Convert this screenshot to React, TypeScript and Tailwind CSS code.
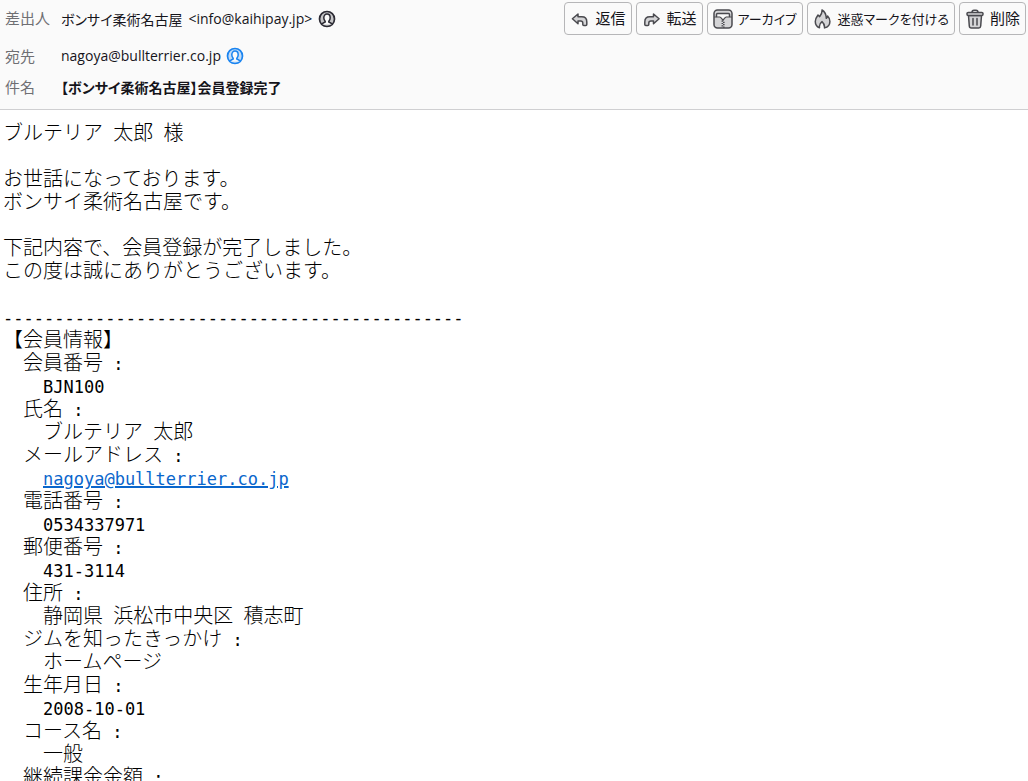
import type { ReactNode } from 'react';

const memberInfo = [
  { label: '会員番号', value: 'BJN100' },
  { label: '氏名', value: 'ブルテリア 太郎' },
  { label: 'メールアドレス', value: 'nagoya@bullterrier.co.jp', mail: true },
  { label: '電話番号', value: '0534337971' },
  { label: '郵便番号', value: '431-3114' },
  { label: '住所', value: '静岡県 浜松市中央区 積志町' },
  { label: 'ジムを知ったきっかけ', value: 'ホームページ' },
  { label: '生年月日', value: '2008-10-01' },
  { label: 'コース名', value: '一般' },
  { label: '継続課金金額', value: '' },
];

const iconProps = {
  viewBox: '0 0 20 20',
  className: 'w-5 h-5 shrink-0',
  fill: '#d4d4d6',
  stroke: '#4a4a4f',
  strokeWidth: 1.5,
  strokeLinejoin: 'round' as const,
  strokeLinecap: 'round' as const,
  'aria-hidden': true,
};

function ReplyIcon() {
  return (
    <svg {...iconProps}>
      <path d="M8 5 2.400 9.800 8 14.800V12h2.600c1.500 0 2.200.8 2.200 2v1.600c0 .6.4 1 1 1h2c.6 0 1-.4 1-1V13c0-3.400-1.900-5.200-5-5.200H8Z" />
    </svg>
  );
}

function ForwardIcon() {
  return (
    <svg {...iconProps}>
      <path d="M11.500 5l5.600 4.800-5.600 5V12H9c-1.500 0-2.200.8-2.200 2v1.600c0 .6-.4 1-1 1h-2c-.6 0-1-.4-1-1V13c0-3.400 1.900-5.200 5-5.200h3.700Z" />
    </svg>
  );
}

function ArchiveIcon() {
  return (
    <svg {...iconProps}>
      <rect x="1" y="1" width="18" height="18" rx="3.500" />
      <path d="M3.500 4.500h13v3.300h-3.300c-1 0-1.700 1.200-3.200 3.200-1.500-2-2.200-3.200-3.200-3.200H3.500Z" fill="#fafafa" stroke="none" />
      <path d="M3.500 7.500v-2c0-.7.400-1 1-1h11c.6 0 1 .3 1 1v2" fill="none" />
      <path d="M1.500 8h5.200c1 0 2 1.700 3.300 3.300 1.300-1.600 2.300-3.300 3.300-3.300h5.200" fill="none" strokeWidth="1.200" />
      <path d="M9.300 11.500v7" strokeWidth="1.600" strokeDasharray="1.200 1.200" strokeLinecap="butt" />
      <path d="M10.800 12.700v6" strokeWidth="1.600" strokeDasharray="1.200 1.200" strokeLinecap="butt" />
    </svg>
  );
}

function JunkIcon() {
  return (
    <svg {...iconProps}>
      <path d="M9 1c.3 3.400-1 4.800-2.400 6.600L5 6C3.500 8 2.300 10 2.300 12.400c0 3 1.700 5.300 4.200 6.400-.5-2.800.4-4.600 2.500-6.200 1.600 1.400 2.800 3.400 2.500 6.300 3.200-.9 5.400-3.300 5.400-6.500 0-2-.8-3.900-2.300-5.400-.1 1-.5 1.800-1.300 2.300C13.200 5.800 12 2.800 9 1Z" />
    </svg>
  );
}

function TrashIcon() {
  return (
    <svg {...iconProps}>
      <path d="M7 3.500c0-1.600.6-2.300 2-2.300h2c1.400 0 2 .7 2 2.300" fill="none" />
      <path d="M3.500 6.500 4.300 17c.1 1.200.8 1.900 2 1.900h7.400c1.200 0 1.900-.7 2-1.900l.8-10.500Z" />
      <rect x="2" y="3.400" width="16" height="3" rx="1.200" />
      <path d="M8 9.500v6.500M12 9.500v6.500" />
    </svg>
  );
}

function ContactIcon({ className }: { className: string }) {
  return (
    <svg viewBox="0 0 18 18" className={`w-[18px] h-[18px] ${className}`} fill="none" stroke="currentColor" aria-hidden="true">
      <circle cx="9" cy="9" r="7.500" strokeWidth="1.700" fill="currentColor" fillOpacity="0.25" />
      <path
        d="M4 14.400c.7-1.400 1.600-1.700 2.700-2.100.7-.2.700-.8.300-1.300-.8-.9-1.200-1.900-1.200-3.200C5.800 5.600 7 4.100 9 4.100s3.200 1.500 3.200 3.700c0 1.300-.4 2.300-1.200 3.200-.4.500-.4 1.100.3 1.300 1.100.4 2 .7 2.700 2.100"
        strokeWidth="1.500"
        fill="#fafafa"
      />
    </svg>
  );
}

function ToolButton({ icon, small, children }: { icon: ReactNode; small?: boolean; children: ReactNode }) {
  return (
    <button
      className={`flex items-center gap-[5px] h-[33px] px-[5px] border border-[#b6b6b8] rounded whitespace-nowrap ${
        small ? 'text-[13px]' : 'text-[15px]'
      }`}
    >
      {icon}
      {children}
    </button>
  );
}

function HeaderAddress({ children }: { children: ReactNode }) {
  return <span className="font-['Open_Sans',sans-serif] text-sm">{children}</span>;
}

// half-width runs are set in the monospace face, the rest stays in the Japanese face
function Plain({ text }: { text: string }) {
  return (
    <>
      {text.split(/([\x20-\x7e]+)/).map((part, i) =>
        i % 2 ? (
          <span key={i} className="font-['DejaVu_Sans_Mono',monospace] text-[17px] leading-none">
            {part}
          </span>
        ) : (
          part
        )
      )}
    </>
  );
}

export default function App() {
  return (
    <div className="h-screen flex flex-col overflow-hidden bg-white">
      <header className="bg-[#fafafa] border-b border-[#cfcfd1] pb-[10px] text-[15px] text-[#15141a] font-['Noto_Sans_CJK_JP',sans-serif] [font-feature-settings:'palt']">
        <div className="flex items-center h-[37px] pl-[5px] pr-0.5">
          <span className="w-14 shrink-0 text-[#6f6f73]">差出人</span>
          <span className="flex items-center gap-[6px] whitespace-nowrap text-sm">
            ボンサイ柔術名古屋
            <HeaderAddress>&lt;info@kaihipay.jp&gt;</HeaderAddress>
            <ContactIcon className="text-[#2b2a33]" />
          </span>
          <div className="flex gap-1 ml-auto">
            <ToolButton icon={<ReplyIcon />}>返信</ToolButton>
            <ToolButton icon={<ForwardIcon />}>転送</ToolButton>
            <ToolButton icon={<ArchiveIcon />} small>
              アーカイブ
            </ToolButton>
            <ToolButton icon={<JunkIcon />} small>
              迷惑マークを付ける
            </ToolButton>
            <ToolButton icon={<TrashIcon />}>削除</ToolButton>
          </div>
        </div>
        <div className="flex items-center h-[38px] pl-[5px]">
          <span className="w-14 shrink-0 text-[#6f6f73]">宛先</span>
          <span className="flex items-center gap-[5px]">
            <HeaderAddress>nagoya@bullterrier.co.jp</HeaderAddress>
            <ContactIcon className="text-[#1a84f0]" />
          </span>
        </div>
        <div className="flex items-center h-6 pl-[5px]">
          <span className="w-14 shrink-0 text-[#6f6f73]">件名</span>
          <h1 className="font-bold text-sm">【ボンサイ柔術名古屋】会員登録完了</h1>
        </div>
      </header>

      <main className="flex-1 overflow-hidden pt-[10px] pl-[3px] text-xl leading-[23px] font-light text-black font-['Noto_Sans_CJK_JP',sans-serif]">
        <p className="mb-[23px]">
          <Plain text="ブルテリア 太郎 様" />
        </p>
        <p className="mb-[23px]">
          お世話になっております。
          <br />
          ボンサイ柔術名古屋です。
        </p>
        <p className="mb-[23px]">
          下記内容で、会員登録が完了しました。
          <br />
          この度は誠にありがとうございます。
        </p>
        <p>
          <Plain text="---------------------------------------------" />
        </p>
        <h2>【会員情報】</h2>
        <dl className="pl-5">
          {memberInfo.map((item) => (
            <div key={item.label}>
              <dt>
                <Plain text={`${item.label} :`} />
              </dt>
              <dd className="pl-5">
                {item.mail ? (
                  <a href={`mailto:${item.value}`} className="text-[#0a66cc] underline">
                    <Plain text={item.value} />
                  </a>
                ) : (
                  <Plain text={item.value} />
                )}
              </dd>
            </div>
          ))}
        </dl>
      </main>
    </div>
  );
}
